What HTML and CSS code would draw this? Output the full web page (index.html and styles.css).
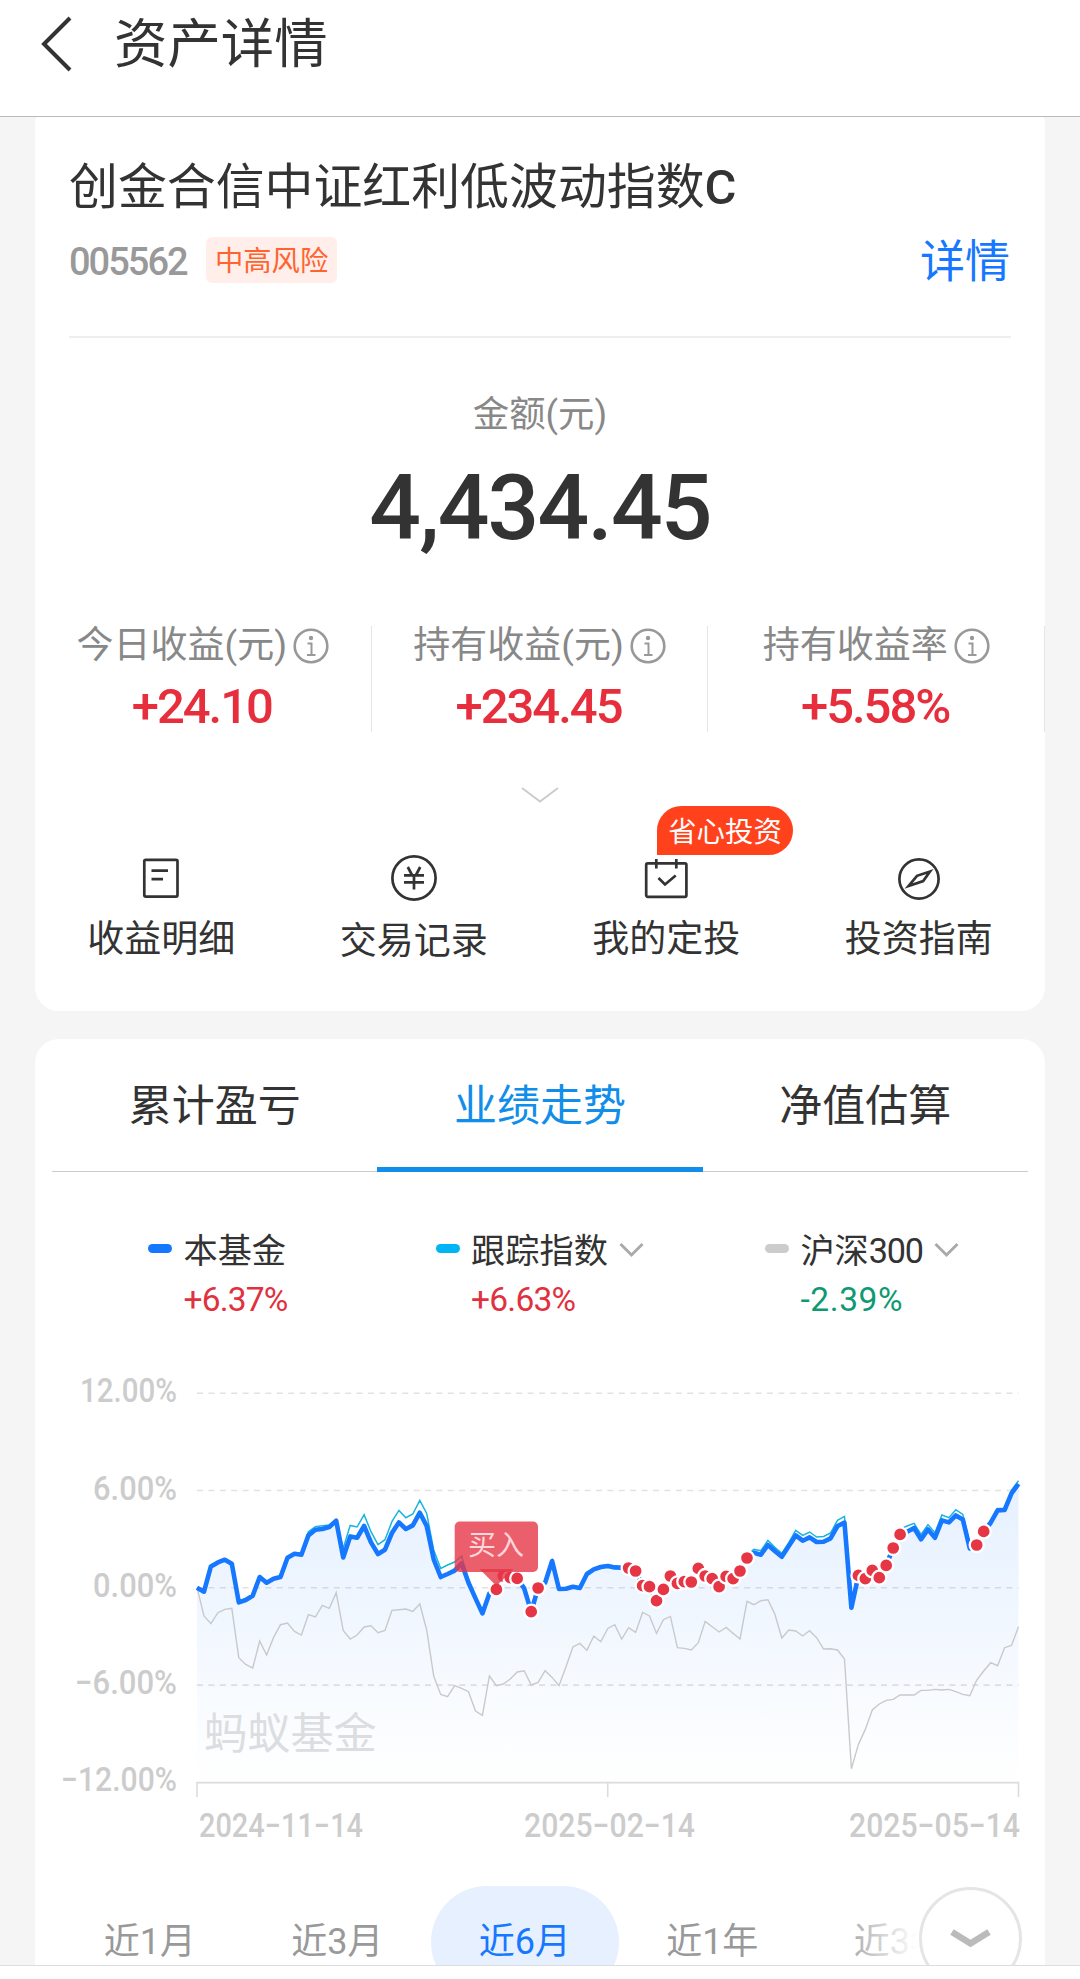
FILE: index.html
```html
<!DOCTYPE html>
<html lang="zh-CN">
<head>
    <meta charset="UTF-8">
    <meta name="viewport" content="width=device-width, initial-scale=1.0">
    <title>资产详情</title>
    <link rel="stylesheet" href="styles.css">
</head>
<body>
    <header class="header">
        <svg class="back" width="34" height="56" viewBox="0 0 34 56"><path d="M31 2 L5 28 L31 54"/></svg>
        <h1>资产详情</h1>
    </header>

    <main class="page">
        <section class="card summary">
            <h2 class="fund-name">创金合信中证红利低波动指数<b>C</b></h2>
            <div class="fund-row">
                <span class="fund-code">005562</span>
                <span class="risk">中高风险</span>
                <a class="detail">详情</a>
            </div>

            <div class="amount-label">金额(元)</div>
            <div class="amount">4,434.45</div>

            <div class="stats">
                <div class="stat">
                    <div class="stat-label">今日收益(元)<svg class="info" viewBox="0 0 36 36"><circle cx="18" cy="18" r="16.3"/><path d="M14.5 15.5h4v11M14 27h8.5"/><circle class="dot" cx="18" cy="10" r="2.2"/></svg></div>
                    <div class="stat-value">+24.10</div>
                </div>
                <div class="stat">
                    <div class="stat-label">持有收益(元)<svg class="info" viewBox="0 0 36 36"><circle cx="18" cy="18" r="16.3"/><path d="M14.5 15.5h4v11M14 27h8.5"/><circle class="dot" cx="18" cy="10" r="2.2"/></svg></div>
                    <div class="stat-value">+234.45</div>
                </div>
                <div class="stat">
                    <div class="stat-label">持有收益率<svg class="info" viewBox="0 0 36 36"><circle cx="18" cy="18" r="16.3"/><path d="M14.5 15.5h4v11M14 27h8.5"/><circle class="dot" cx="18" cy="10" r="2.2"/></svg></div>
                    <div class="stat-value">+5.58%</div>
                </div>
            </div>

            <svg class="expand" width="38" height="16" viewBox="0 0 38 16"><path d="M1 1 L19 14.5 L37 1"/></svg>

            <nav class="actions">
                <a class="action">
                    <svg viewBox="0 0 46 46"><rect x="6.3" y="4.8" width="33.2" height="36.8" rx="1.5"/><path d="M13.5 15.7h16.5M13.5 24.2h11.5"/></svg>
                    <span>收益明细</span>
                </a>
                <a class="action action-low">
                    <svg viewBox="0 0 46 46"><circle cx="23" cy="23" r="21.6"/><path d="M16.8 12 L21 20M29.2 12 L25 20M13 20.3h20M13 27.3h20M23 20v14.5"/></svg>
                    <span>交易记录</span>
                </a>
                <a class="action">
                    <em class="badge">省心投资</em>
                    <svg viewBox="0 0 46 46"><rect x="3.2" y="8.4" width="40.2" height="33.4" rx="1.5"/><path d="M13.3 4v9.5M33.3 4v9.5M15.5 23 L22 29.5 L32.7 20.5"/></svg>
                    <span>我的定投</span>
                </a>
                <a class="action">
                    <svg viewBox="0 0 46 46"><circle cx="23" cy="24" r="19.6"/><path d="M34 16.5 L27.2 26 L12.6 31 L21 20.8 Z"/></svg>
                    <span>投资指南</span>
                </a>
            </nav>
        </section>

        <section class="card trend">
            <nav class="tabs">
                <a>累计盈亏</a>
                <a class="active">业绩走势</a>
                <a>净值估算</a>
            </nav>

            <div class="legend">
                <div class="legend-item">
                    <i class="mark mark-fund"></i>
                    <div class="legend-name">本基金</div>
                    <div class="legend-value up">+6.37%</div>
                </div>
                <div class="legend-item">
                    <i class="mark mark-index"></i>
                    <div class="legend-name">跟踪指数<svg class="caret" viewBox="0 0 25 16"><path d="M1.5 2 L12.5 13 L23.5 2"/></svg></div>
                    <div class="legend-value up">+6.63%</div>
                </div>
                <div class="legend-item">
                    <i class="mark mark-hs"></i>
                    <div class="legend-name">沪深<span class="num">300</span><svg class="caret" viewBox="0 0 25 16"><path d="M1.5 2 L12.5 13 L23.5 2"/></svg></div>
                    <div class="legend-value down">-2.39%</div>
                </div>
            </div>

            <svg class="chart" width="1010" height="541" viewBox="0 0 1010 541">
                <defs>
                    <linearGradient id="fill" gradientUnits="userSpaceOnUse" x1="0" y1="165" x2="0" y2="463">
                        <stop offset="0" stop-color="#1677ff" stop-opacity="0.11"/>
                        <stop offset="1" stop-color="#1677ff" stop-opacity="0"/>
                    </linearGradient>
                </defs>
                <path id="area" fill="url(#fill)"/>
                <g class="grid">
                    <path d="M162 74.3H983.5M162 171.5H983.5M162 268.8H983.5M162 366.1H983.5"/>
                </g>
                <path class="axis" d="M162 478V463.6H983.5V478M572.7 463.6V478"/>
                <g class="y-labels">
                    <text x="142" y="83.3" textLength="97" lengthAdjust="spacingAndGlyphs">12.00%</text>
                    <text x="142" y="180.6" textLength="84" lengthAdjust="spacingAndGlyphs">6.00%</text>
                    <text x="142" y="277.8" textLength="84" lengthAdjust="spacingAndGlyphs">0.00%</text>
                    <text x="142" y="375.2" textLength="102" lengthAdjust="spacingAndGlyphs">−6.00%</text>
                    <text x="142" y="472" textLength="116" lengthAdjust="spacingAndGlyphs">−12.00%</text>
                </g>
                <g class="x-labels">
                    <text x="164" y="518" textLength="164" lengthAdjust="spacingAndGlyphs">2024−11−14</text>
                    <text x="489" y="518" textLength="171" lengthAdjust="spacingAndGlyphs">2025−02−14</text>
                    <text x="814" y="518" textLength="171" lengthAdjust="spacingAndGlyphs">2025−05−14</text>
                </g>
                <text class="watermark" x="169" y="430">蚂蚁基金</text>
                <polyline id="line-hs" class="line-hs"/>
                <polyline id="line-index" class="line-index"/>
                <polyline id="line-fund" class="line-fund"/>
                <g id="trades" class="trades"></g>
                <g class="tip">
                    <rect x="419.7" y="202.5" width="83.3" height="50.5" rx="5"/>
                    <path d="M444.5 250 H478.5 L461.5 267 Z"/>
                    <text x="461" y="236">买入</text>
                </g>
            </svg>

            <div class="ranges">
                <a>近1月</a>
                <a>近3月</a>
                <a class="active">近6月</a>
                <a>近1年</a>
                <a>近3年</a>
                <div class="more">
                    <svg width="103" height="103" viewBox="0 0 103 103"><circle cx="51.5" cy="51.5" r="50"/><path d="M33 45 L51.5 56.5 L70 45"/></svg>
                </div>
            </div>
        </section>
    </main>
    <footer class="footer"></footer>

    <script src="script.js"></script>
</body>
</html>
```

FILE: styles.css
```css
* {
    box-sizing: border-box;
    margin: 0;
    padding: 0;
}
body {
    font-family: Roboto, "Noto Sans CJK SC", sans-serif;
    color: #333;
    background: #fff;
    height: 1979px;
    display: flex;
    flex-direction: column;
    overflow: hidden;
}
svg {
    display: block;
    fill: none;
}
h1, h2 {
    font-weight: 400;
}
.header {
    height: 117px;
    flex: none;
    display: flex;
    align-items: flex-start;
    padding: 16px 0 0 39px;
    border-bottom: 1px solid #bbb;
}
.back path {
    stroke: #333;
    stroke-width: 4;
}
.header h1 {
    font-size: 53.4px;
    line-height: 58px;
    margin-left: 41px;
}
.page {
    height: 1848px;
    flex: none;
    overflow: hidden;
    background: #f5f5f5;
    padding: 0 35px;
}
.card {
    background: #fff;
    border-radius: 24px;
}

/* Montant et rendement */
.summary {
    height: 894px;
    padding-top: 41px;
    border-radius: 4px 4px 24px 24px;
}
.fund-name {
    font-size: 48.9px;
    line-height: 60px;
    padding-left: 34px;
}
.fund-name b {
    font-weight: 500;
}
.fund-row {
    display: flex;
    align-items: center;
    height: 108px;
    margin: 12px 34px 0;
    padding-bottom: 46px;
    border-bottom: 2px solid #eee;
}
.fund-code {
    font-size: 38px;
    font-weight: 500;
    letter-spacing: -2px;
    color: #999;
    width: 137px;
    padding-top: 4px;
}
.risk {
    height: 46px;
    font-size: 28.3px;
    line-height: 50px;
    padding: 0 9px;
    color: #ff6430;
    background: #ffeeea;
    border-radius: 6px;
}
.detail {
    margin-left: auto;
    padding-top: 6px;
    font-size: 45px;
    line-height: 56px;
    color: #1677ff;
    margin-right: 1px;
}
.amount-label {
    margin-top: 52px;
    font-size: 36.4px;
    line-height: 50px;
    text-align: center;
    color: #888;
}
.amount {
    margin-top: 18px;
    font-size: 91px;
    line-height: 100px;
    font-weight: 500;
    letter-spacing: -1.8px;
    text-align: center;
}
.stats {
    display: grid;
    grid-template-columns: repeat(3, 1fr);
    height: 102px;
    margin-top: 68px;
}
.stat {
    border-right: 1px solid #e5e5e5;
    text-align: center;
}
.stat-label {
    display: flex;
    justify-content: center;
    align-items: center;
    font-size: 37px;
    line-height: 40px;
    color: #888;
}
.info {
    width: 36px;
    height: 36px;
    margin: -1px 0 0 6px;
    stroke: #999;
    stroke-width: 2.6;
}
.info path {
    stroke-width: 2;
}
.info .dot {
    fill: #999;
    stroke: none;
}
.stat-value {
    margin-top: 16px;
    font-size: 49px;
    line-height: 50px;
    font-weight: 500;
    letter-spacing: -2px;
    text-indent: -2px;
    color: #e62e3d;
}
.expand {
    margin: 59px auto 0;
    stroke: #ccc;
    stroke-width: 2;
}
.actions {
    display: grid;
    grid-template-columns: repeat(4, 1fr);
    margin-top: 52px;
}
.action {
    position: relative;
    display: flex;
    flex-direction: column;
    align-items: center;
    font-size: 37px;
    line-height: 44px;
}
.action svg {
    width: 46px;
    height: 46px;
    margin-bottom: 17px;
    stroke: #333;
    stroke-width: 2.7;
}
.action-low svg {
    margin-bottom: 19px;
}
.badge {
    position: absolute;
    left: 117px;
    top: -49px;
    width: 136px;
    height: 49px;
    text-align: center;
    font-style: normal;
    font-size: 28.4px;
    line-height: 53px;
    color: #fff;
    background: #ff411c;
    border-radius: 25px 25px 25px 0;
}

/* Courbe */
.trend {
    margin-top: 28px;
    height: 1000px;
}
.tabs {
    display: grid;
    grid-template-columns: repeat(3, 1fr);
    height: 133px;
    margin: 0 17px;
    font-size: 43px;
    line-height: 135px;
    text-align: center;
    border-bottom: 1px solid #ccc;
}
.tabs .active {
    height: 133px;
    color: #108ee9;
    border-bottom: 5px solid #108ee9;
}
.legend {
    display: grid;
    grid-template-columns: repeat(3, 1fr);
    justify-items: center;
    padding: 0 22px;
    margin-top: 59px;
    margin-bottom: -1px;
}
.legend-item {
    display: grid;
    grid-template-columns: 35px auto;
    align-items: center;
    row-gap: 9px;
    line-height: 40px;
}
.mark {
    width: 24px;
    height: 9px;
    margin-bottom: 5px;
    border-radius: 5px;
}
.mark-fund {
    background: #1677ff;
}
.mark-index {
    background: #00b5f5;
}
.mark-hs {
    background: #ccc;
}
.legend-name {
    display: flex;
    align-items: center;
    font-size: 34.2px;
}
.num {
    letter-spacing: -1.3px;
}
.caret {
    width: 25px;
    height: 16px;
    margin-left: 11px;
    margin-bottom: 2px;
    stroke: #aaa;
    stroke-width: 3;
}
.legend-value {
    grid-column: 2;
    font-size: 33.5px;
    letter-spacing: -0.8px;
}
.up {
    color: #e0313f;
}
.down {
    color: #0f9972;
    letter-spacing: 0.6px;
}
.grid path {
    stroke: #8c8f98;
    stroke-opacity: 0.26;
    stroke-width: 1.6;
    stroke-dasharray: 6 5.4;
}
.axis {
    stroke: #dcdcdc;
    stroke-width: 1.6;
}
.y-labels, .x-labels {
    font-size: 33px;
    font-weight: 500;
    fill: #ccc;
}
.y-labels {
    text-anchor: end;
}
.watermark {
    font-size: 43.2px;
    fill: #dcdde0;
}
.line-hs {
    stroke: #c9c9c9;
    stroke-width: 1.4;
}
.line-index {
    stroke: #18b4e0;
    stroke-width: 1.5;
}
.line-fund {
    stroke: #1677ff;
    stroke-width: 4.6;
    stroke-linejoin: round;
}
.trades circle {
    fill: #e63646;
    stroke: #fff;
    stroke-width: 2.3;
}
.tip {
    fill: #e63646;
}
.tip rect, .tip path {
    fill-opacity: 0.8;
}
.tip text {
    font-size: 28px;
    fill: #ffd7da;
    text-anchor: middle;
}
.ranges {
    position: relative;
    display: grid;
    grid-template-columns: repeat(5, 187.5px);
    margin: 26px 0 0 21px;
    font-size: 36px;
    line-height: 112px;
    text-align: center;
    color: #999;
}
.ranges .active {
    color: #1677ff;
    background: #e6f0ff;
    border-radius: 56px;
}
.more {
    position: absolute;
    left: 795px;
    top: 0;
    width: 172px;
    height: 110px;
    padding: 1px 0 0 68px;
    background: linear-gradient(to right, rgba(255, 255, 255, 0.2), #fff 66px);
}
.more circle {
    fill: #fff;
    stroke: #e5e5e5;
    stroke-width: 3;
}
.more path {
    stroke: #bbb;
    stroke-width: 6.5;
}
.footer {
    flex: 1;
    border-top: 1px solid #ddd;
}
```

FILE: script.js
```js
// Ecart à la ligne 0 %, 48.67 unités = 1 %
const fund = [
    0, -12, 64, 76, 84, 72, -44, -37, -24, 32, 15, 27, 32, 90, 102, 99, 157, 174, 176, 182,
    201, 91, 154, 150, 185, 136, 101, 114, 164, 196, 176, 187, 225, 185, 85, 32, 41, 51, 73, 15,
    -32, -77, -17, -5, 35, 30, 28, -2, -72, -1, 15, 80, -4, -3, 3, -1, 41, 55, 62, 65,
    61, 60, 59, 50, 6, 3, -39, -5, 35, 13, 18, 17, 58, 35, 27, 3, 34, 27, 50, 89,
    105, 99, 128, 110, 93, 125, 157, 141, 151, 137, 138, 148, 185, 195, -60, 37, 27, 52, 30, 67,
    119, 160, 168, 179, 145, 175, 150, 202, 196, 217, 205, 118, 128, 169, 195, 232, 233, 283, 311
];
const index = [
    0, -9, 66, 78, 86, 73, -42, -35, -22, 34, 17, 29, 34, 92, 105, 102, 168, 183, 186, 188,
    203, 118, 187, 182, 219, 168, 129, 144, 198, 232, 210, 221, 262, 223, 113, 58, 68, 77, 95, 25,
    -28, -75, -14, -3, 37, 32, 30, 0, -70, 1, 17, 82, -2, -1, 5, 1, 43, 57, 66, 68,
    65, 63, 62, 52, 8, 5, -37, -3, 37, 15, 20, 19, 60, 38, 30, 6, 38, 32, 56, 97,
    115, 111, 142, 121, 103, 135, 172, 157, 167, 152, 154, 164, 202, 214, -50, 45, 35, 62, 42, 79,
    133, 176, 185, 193, 160, 189, 165, 218, 210, 234, 220, 133, 138, 178, 201, 238, 238, 293, 321
];
const hs300 = [
    0, -85, -108, -75, -65, -62, -210, -230, -241, -160, -202, -149, -111, -106, -131, -142, -81, -88, -53, -62,
    -15, -128, -154, -142, -118, -114, -135, -128, -68, -66, -64, -71, -49, -127, -265, -320, -327, -294, -302, -312,
    -370, -383, -265, -294, -289, -274, -253, -249, -292, -284, -249, -269, -294, -237, -178, -167, -188, -145, -162, -122,
    -111, -154, -120, -134, -74, -85, -137, -96, -86, -180, -182, -187, -165, -101, -117, -133, -119, -137, -154, -41,
    -51, -39, -36, -79, -151, -127, -130, -145, -129, -150, -184, -183, -187, -214, -543, -470, -425, -367, -349, -338,
    -335, -322, -322, -322, -308, -308, -305, -307, -305, -312, -320, -324, -277, -250, -225, -234, -180, -173, -117
];
const buys = [43, 44, 45, 46, 48, 49, 62, 63, 64, 65, 66, 67, 68, 69, 70, 71, 72, 73, 74, 75,
    76, 77, 78, 79, 95, 96, 97, 98, 99, 100, 101, 112, 113];

const px = i => (162 + i * 821.5 / 118).toFixed(1);
const py = v => (268.7 - v / 3).toFixed(1);
const toPoints = data => data.map((v, i) => `${px(i)},${py(v)}`).join(' ');

document.getElementById('line-fund').setAttribute('points', toPoints(fund));
document.getElementById('line-index').setAttribute('points', toPoints(index));
document.getElementById('line-hs').setAttribute('points', toPoints(hs300));
document.getElementById('area').setAttribute('d', `M162,463 L${toPoints(fund)} L983.5,463 Z`);
document.getElementById('trades').innerHTML = buys
    .map(i => `<circle cx="${px(i)}" cy="${py(fund[i])}" r="7"/>`)
    .join('');
```
